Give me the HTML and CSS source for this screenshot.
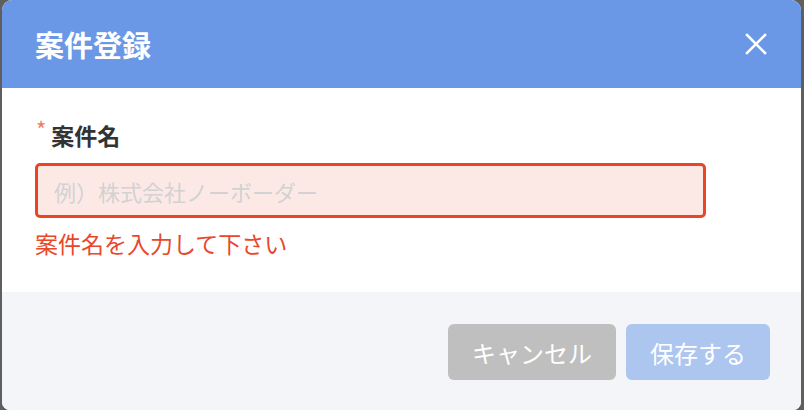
FILE: index.html
```html
<!DOCTYPE html>
<html lang="ja">
<head>
<meta charset="utf-8">
<link rel="stylesheet" href="styles.css">
</head>
<body>
<div class="modal">
  <div class="modal-header">
    <h1 class="modal-title">案件登録</h1>
    <button class="close-btn" aria-label="閉じる">
      <svg width="22" height="22" viewBox="0 0 22 22"><path d="M2 2L20 20M20 2L2 20" stroke="#fff" stroke-width="2.6" stroke-linecap="square"/></svg>
    </button>
  </div>
  <div class="modal-body">
    <label class="field-label"><span class="required">*</span>案件名</label>
    <input class="field-input" type="text" placeholder="例）株式会社ノーボーダー">
    <p class="field-error">案件名を入力して下さい</p>
  </div>
  <div class="modal-footer">
    <button class="btn btn-cancel">キャンセル</button>
    <button class="btn btn-save">保存する</button>
  </div>
</div>
</body>
</html>
```
FILE: styles.css
```css
* { box-sizing: border-box; }
html, body { margin: 0; padding: 0; }
body {
  background: #5f5f5f;
  width: 804px;
  height: 410px;
  overflow: hidden;
  font-family: "Noto Sans CJK JP", "Noto Sans", sans-serif;
}
.modal {
  margin-left: 2px;
  width: 799px;
  height: 410px;
  background: #fff;
  border-radius: 10px 10px 8px 8px;
  overflow: hidden;
  display: flex;
  flex-direction: column;
}
.modal-header {
  height: 88px;
  background: #6a98e6;
  display: flex;
  align-items: center;
  justify-content: space-between;
  padding: 0 34px 0 33px;
  flex-shrink: 0;
}
.modal-title {
  margin: 0;
  color: #fff;
  font-size: 29px;
  font-weight: 700;
  line-height: 40px;
}
.close-btn {
  background: none;
  border: none;
  padding: 0;
  width: 22px;
  height: 22px;
  display: flex;
  cursor: pointer;
}
.modal-body {
  height: 204px;
  padding: 32px 33px 0 33px;
  display: flex;
  flex-direction: column;
  flex-shrink: 0;
}
.field-label {
  display: flex;
  align-items: flex-start;
  font-size: 23px;
  font-weight: 700;
  color: #333;
  line-height: 30px;
}
.required {
  color: #ef7a66;
  font-size: 22px;
  line-height: 20px;
  margin: -2px 5px 0 1px;
  font-weight: 400;
}
.field-input {
  margin-top: 13px;
  width: 671px;
  height: 55px;
  border: 3px solid #eb4526;
  border-radius: 5px;
  background: #fce9e6;
  padding: 0 16px;
  font-family: inherit;
  font-size: 22px;
  color: #333;
  outline: none;
}
.field-input::placeholder { color: #d2d2d2; }
.field-error {
  margin: 10px 0 0 0;
  color: #e9472a;
  font-size: 23px;
  line-height: 30px;
}
.modal-footer {
  flex: 1;
  background: #f4f5f9;
  display: flex;
  justify-content: flex-end;
  align-items: flex-start;
  gap: 10px;
  padding: 32px 31px 0 0;
}
.btn {
  height: 56px;
  border: none;
  border-radius: 6px;
  color: #fff;
  font-family: inherit;
  font-size: 24px;
  padding: 0;
}
.btn-cancel { width: 168px; background: #bfbfbf; }
.btn-save { width: 144px; background: #adc6f0; }
```
